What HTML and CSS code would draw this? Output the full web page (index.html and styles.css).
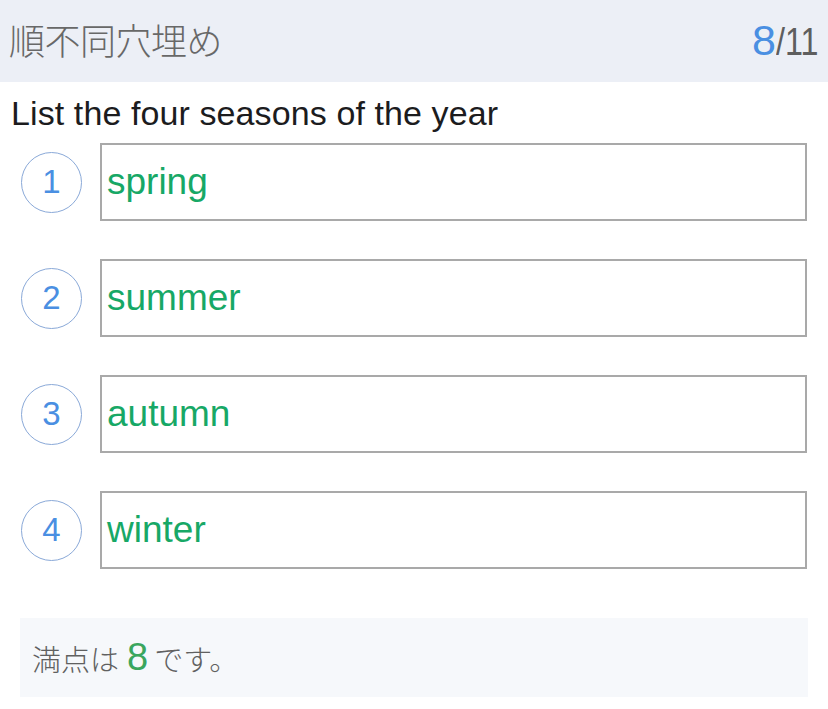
FILE: index.html
```html
<!DOCTYPE html>
<html lang="ja">
<head>
<meta charset="utf-8">
<link rel="stylesheet" href="styles.css">
</head>
<body>
<header class="header">
  <div class="title">順不同穴埋め</div>
  <div class="counter"><span class="current">8</span><span class="total">/11</span></div>
</header>
<div class="question">List the four seasons of the year</div>
<div class="answers">
  <div class="row"><div class="num">1</div><div class="box">spring</div></div>
  <div class="row"><div class="num">2</div><div class="box">summer</div></div>
  <div class="row"><div class="num">3</div><div class="box">autumn</div></div>
  <div class="row"><div class="num">4</div><div class="box">winter</div></div>
</div>
<div class="score">満点は<span class="points">8</span>です。</div>
</body>
</html>
```
FILE: styles.css
```css
html, body {
  margin: 0;
  padding: 0;
  background: #ffffff;
  font-family: "Liberation Sans", "Noto Sans CJK JP", sans-serif;
}
.header {
  height: 82px;
  background: #eceff6;
  display: flex;
  align-items: center;
  justify-content: space-between;
  padding: 0 10px 0 9px;
}
.title {
  font-family: "Noto Sans CJK JP", sans-serif;
  font-size: 36px;
  font-weight: 300;
  color: #686868;
  letter-spacing: -0.5px;
  margin-top: -4px;
}
.counter {
  display: flex;
  align-items: baseline;
  margin-top: -2px;
}
.current {
  font-size: 43px;
  color: #4a8fe2;
}
.total {
  display: inline-block;
  font-size: 38px;
  color: #5e5e5e;
  transform: scaleX(0.85);
  transform-origin: left;
  margin-right: -8px;
}
.question {
  margin-top: 13px;
  padding-left: 11px;
  font-size: 34px;
  line-height: 36px;
  letter-spacing: 0.1px;
  color: #1c1c1e;
}
.answers {
  margin-top: 12px;
  display: flex;
  flex-direction: column;
  gap: 38px;
}
.row {
  display: flex;
  align-items: center;
  padding: 0 21px 0 21px;
  height: 78px;
}
.num {
  width: 59px;
  height: 59px;
  border: 1px solid #8aa9d8;
  border-radius: 50%;
  display: flex;
  align-items: center;
  justify-content: center;
  font-size: 33px;
  color: #4a8fe2;
  flex: none;
}
.box {
  margin-left: 18px;
  flex: 1;
  height: 74px;
  border: 2px solid #a9a9a9;
  display: flex;
  align-items: center;
  padding-left: 5px;
  font-size: 37px;
  color: #17a866;
}
.score {
  margin: 49px 20px 0 20px;
  height: 79px;
  background: #f6f8fb;
  display: flex;
  align-items: center;
  padding-left: 12px;
  font-family: "Noto Sans CJK JP", sans-serif;
  font-size: 29px;
  font-weight: 300;
  color: #606060;
}
.points {
  font-family: "Liberation Sans", sans-serif;
  font-size: 38px;
  color: #3aa65e;
  margin: 0 6px 0 8px;
}
```
